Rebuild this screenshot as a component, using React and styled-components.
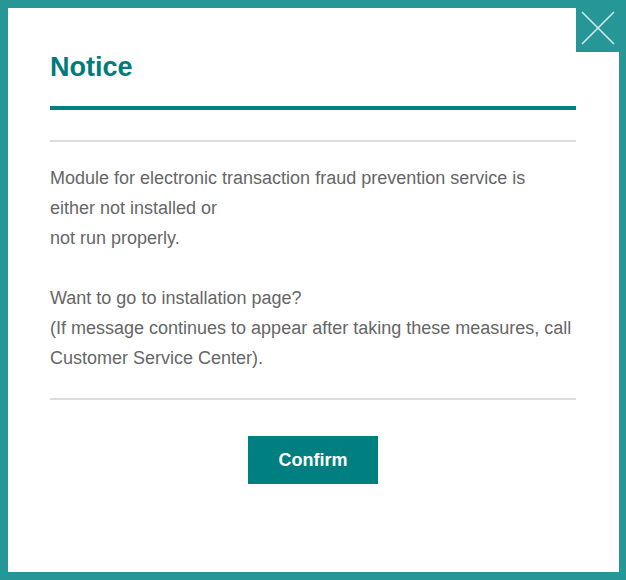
import styled, { createGlobalStyle } from "styled-components";

const GlobalStyle = createGlobalStyle`
  html, body {
    margin: 0;
    padding: 0;
    background: #fff;
  }
  * {
    box-sizing: border-box;
  }
`;

export default function App() {
  return (
    <>
      <GlobalStyle />
      <Dialog>
        <Header>
          <Title>Notice</Title>
        </Header>
        <Divider $top={30} />
        <Message>
          <p>
            Module for electronic transaction fraud prevention service is
            <br />
            either not installed or
            <br />
            not run properly.
          </p>
          <p>
            Want to go to installation page?
            <br />
            (If message continues to appear after taking these measures, call
            <br />
            Customer Service Center).
          </p>
        </Message>
        <Divider $top={25} />
        <Footer>
          <ConfirmButton type="button">Confirm</ConfirmButton>
        </Footer>
        <CloseButton type="button" aria-label="Close">
          <svg width="34" height="34" viewBox="0 0 34 34">
            <path
              d="M1 1 L33 33 M33 1 L1 33"
              stroke="#cfeaea"
              strokeWidth="1.6"
              fill="none"
            />
          </svg>
        </CloseButton>
      </Dialog>
    </>
  );
}

const Dialog = styled.div`
  position: relative;
  width: 626px;
  height: 580px;
  border: 8px solid #279696;
  border-right-width: 7px;
  background: #fff;
  padding: 0 43px 0 42px;
  font-family: "Liberation Sans", Arial, sans-serif;
`;

const Header = styled.div`
  padding-top: 43px;
  height: 102px;
  border-bottom: 4px solid #007f80;
`;

const Title = styled.h1`
  margin: 0;
  font-size: 27px;
  line-height: 32px;
  font-weight: 700;
  color: #007b7b;
`;

const Divider = styled.hr`
  margin: ${(p) => p.$top}px 0 0;
  border: 0;
  height: 2px;
  background: #dcdcdc;
`;

const Message = styled.div`
  padding-top: 21px;
  color: #666;
  font-size: 18px;
  line-height: 30px;

  p {
    margin: 0;
  }
  p + p {
    margin-top: 30px;
  }
`;

const Footer = styled.div`
  display: flex;
  justify-content: center;
  padding-top: 36px;
`;

const ConfirmButton = styled.button`
  width: 130px;
  height: 48px;
  border: 0;
  background: #007f80;
  color: #fff;
  font-family: "Liberation Sans", Arial, sans-serif;
  font-size: 18px;
  font-weight: 700;
  cursor: pointer;
`;

const CloseButton = styled.button`
  position: absolute;
  top: -8px;
  right: -7px;
  width: 50px;
  height: 52px;
  border: 0;
  padding: 11px 0 0 5px;
  background: #279696;
  display: flex;
  align-items: flex-start;
  justify-content: flex-start;
  cursor: pointer;
`;
